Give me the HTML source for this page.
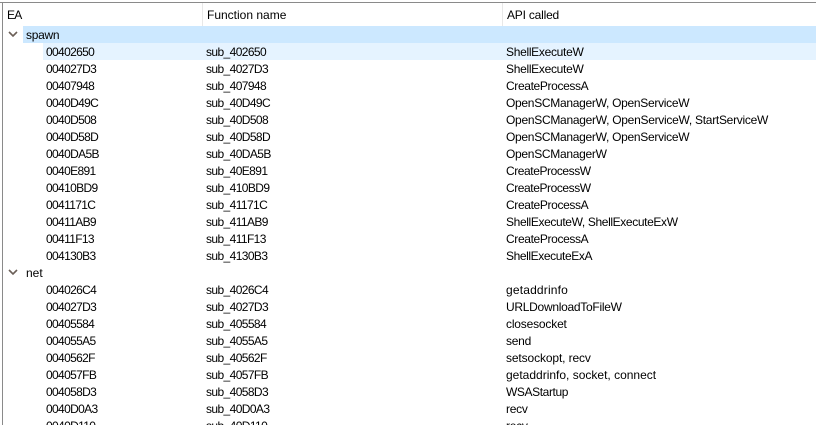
<!DOCTYPE html>
<html><head><meta charset="utf-8"><style>
html,body{margin:0;padding:0;background:#fff}
#w{position:relative;width:816px;height:425px;overflow:hidden;background:#fff;font:12px/17px "Liberation Sans",sans-serif;color:#000}
.t{position:absolute;white-space:nowrap;height:17px;margin-top:1px}
.e{left:46px;letter-spacing:-.65px}
.f{left:206px;letter-spacing:-.6px}
.a{left:506px}
.h{margin-top:0}
.b{position:absolute}
</style></head><body><div id="w">
<div class="b" style="left:0;top:2px;width:816px;height:1px;background:#8a8a8a"></div>
<div class="b" style="left:2px;top:2px;width:1px;height:423px;background:#8a8a8a"></div>
<div class="b" style="left:202px;top:3px;width:1px;height:23px;background:#e8e8e8"></div>
<div class="b" style="left:502px;top:3px;width:1px;height:23px;background:#e8e8e8"></div>
<div class="b" style="left:23px;top:26px;width:793px;height:17px;background:#cce8ff"></div>
<div class="b" style="left:43px;top:43px;width:773px;height:17px;background:#e5f3ff"></div>
<div class="t h" style="left:7px;top:7px;letter-spacing:-.8px">EA</div>
<div class="t h" style="left:207px;top:7px">Function name</div>
<div class="t h" style="left:507px;top:7px;letter-spacing:-.2px">API called</div>
<svg class="b" style="left:8px;top:31px" width="10" height="7"><path d="M1 1L5 5L9 1" fill="none" stroke="#6b5f57" stroke-width="1.6"/></svg>
<svg class="b" style="left:8px;top:269px" width="10" height="7"><path d="M1 1L5 5L9 1" fill="none" stroke="#6b5f57" stroke-width="1.6"/></svg>
<div class="t" style="left:26px;top:26px;letter-spacing:-.3px">spawn</div>
<div class="t" style="left:26px;top:264px">net</div>
<div class="t e" style="top:43px">00402650</div><div class="t f" style="top:43px">sub_402650</div><div class="t a" style="top:43px;letter-spacing:-.3px">ShellExecuteW</div>
<div class="t e" style="top:60px">004027D3</div><div class="t f" style="top:60px">sub_4027D3</div><div class="t a" style="top:60px;letter-spacing:-.3px">ShellExecuteW</div>
<div class="t e" style="top:77px">00407948</div><div class="t f" style="top:77px">sub_407948</div><div class="t a" style="top:77px;letter-spacing:-.36px">CreateProcessA</div>
<div class="t e" style="top:94px">0040D49C</div><div class="t f" style="top:94px">sub_40D49C</div><div class="t a" style="top:94px;letter-spacing:-.29px">OpenSCManagerW, OpenServiceW</div>
<div class="t e" style="top:111px">0040D508</div><div class="t f" style="top:111px">sub_40D508</div><div class="t a" style="top:111px;letter-spacing:-.28px">OpenSCManagerW, OpenServiceW, StartServiceW</div>
<div class="t e" style="top:128px">0040D58D</div><div class="t f" style="top:128px">sub_40D58D</div><div class="t a" style="top:128px;letter-spacing:-.29px">OpenSCManagerW, OpenServiceW</div>
<div class="t e" style="top:145px">0040DA5B</div><div class="t f" style="top:145px">sub_40DA5B</div><div class="t a" style="top:145px;letter-spacing:-.29px">OpenSCManagerW</div>
<div class="t e" style="top:162px">0040E891</div><div class="t f" style="top:162px">sub_40E891</div><div class="t a" style="top:162px;letter-spacing:-.43px">CreateProcessW</div>
<div class="t e" style="top:179px">00410BD9</div><div class="t f" style="top:179px">sub_410BD9</div><div class="t a" style="top:179px;letter-spacing:-.43px">CreateProcessW</div>
<div class="t e" style="top:196px">0041171C</div><div class="t f" style="top:196px">sub_41171C</div><div class="t a" style="top:196px;letter-spacing:-.36px">CreateProcessA</div>
<div class="t e" style="top:213px">00411AB9</div><div class="t f" style="top:213px">sub_411AB9</div><div class="t a" style="top:213px;letter-spacing:-.37px">ShellExecuteW, ShellExecuteExW</div>
<div class="t e" style="top:230px">00411F13</div><div class="t f" style="top:230px">sub_411F13</div><div class="t a" style="top:230px;letter-spacing:-.36px">CreateProcessA</div>
<div class="t e" style="top:247px">004130B3</div><div class="t f" style="top:247px">sub_4130B3</div><div class="t a" style="top:247px;letter-spacing:-.4px">ShellExecuteExA</div>
<div class="t e" style="top:281px">004026C4</div><div class="t f" style="top:281px">sub_4026C4</div><div class="t a" style="top:281px;letter-spacing:.18px">getaddrinfo</div>
<div class="t e" style="top:298px">004027D3</div><div class="t f" style="top:298px">sub_4027D3</div><div class="t a" style="top:298px;letter-spacing:-.28px">URLDownloadToFileW</div>
<div class="t e" style="top:315px">00405584</div><div class="t f" style="top:315px">sub_405584</div><div class="t a" style="top:315px;letter-spacing:-.18px">closesocket</div>
<div class="t e" style="top:332px">004055A5</div><div class="t f" style="top:332px">sub_4055A5</div><div class="t a" style="top:332px;letter-spacing:-.25px">send</div>
<div class="t e" style="top:349px">0040562F</div><div class="t f" style="top:349px">sub_40562F</div><div class="t a" style="top:349px;letter-spacing:-.12px">setsockopt, recv</div>
<div class="t e" style="top:366px">004057FB</div><div class="t f" style="top:366px">sub_4057FB</div><div class="t a" style="top:366px">getaddrinfo, socket, connect</div>
<div class="t e" style="top:383px">004058D3</div><div class="t f" style="top:383px">sub_4058D3</div><div class="t a" style="top:383px;letter-spacing:-.4px">WSAStartup</div>
<div class="t e" style="top:400px">0040D0A3</div><div class="t f" style="top:400px">sub_40D0A3</div><div class="t a" style="top:400px;letter-spacing:-.25px">recv</div>
<div class="t e" style="top:417px">0040D110</div><div class="t f" style="top:417px">sub_40D110</div><div class="t a" style="top:417px;letter-spacing:-.25px">recv</div>
</div></body></html>
